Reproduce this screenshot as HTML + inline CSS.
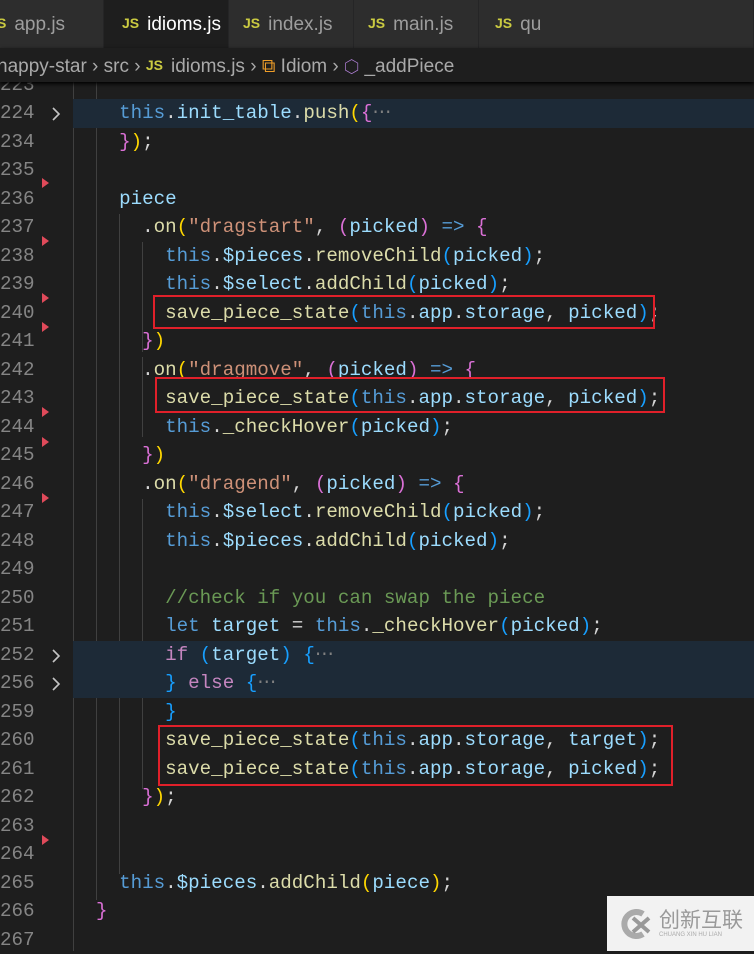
<!DOCTYPE html>
<html><head><meta charset="utf-8"><style>
*{margin:0;padding:0;box-sizing:border-box}
body{width:754px;height:951px;background:#1e1e1e;overflow:hidden;position:relative;font-family:"Liberation Sans",sans-serif}
.tabs{position:absolute;left:0;top:0;width:754px;height:48px;background:#252526}
.tab{position:absolute;top:0;height:48px;background:#2d2d2d;color:#9d9d9d;font-size:19px;line-height:46px;border-right:1px solid #252526}
.tab.act{background:#1e1e1e;color:#fff}
.js{color:#cbcb41;font-weight:bold;font-size:14px;margin-right:8px;vertical-align:2px}
.crumb{position:absolute;top:48px;left:0;width:754px;height:34px;background:#1e1e1e;color:#a9a9a9;font-size:19px;line-height:34px;white-space:nowrap;box-shadow:0 2px 4px #000;z-index:5}
.code{position:absolute;top:82px;left:0;width:754px;height:869px;overflow:hidden}
.row{position:absolute;left:0;width:754px;height:28.5px;font-family:"Liberation Mono",monospace;font-size:19.2px;line-height:28.5px;white-space:pre}
.ln{position:absolute;left:0;width:34px;text-align:right;color:#858585}
.tx{position:absolute;left:73px;color:#d4d4d4}
.hl{position:absolute;left:73px;right:0;top:0;bottom:0;background:#1d2a37}
.chev{position:absolute;left:49px;top:7px}
.k{color:#569cd6}.f{color:#dcdcaa}.v{color:#9cdcfe}.s{color:#ce9178}.c{color:#6a9955}.p{color:#c586c0}
.y{color:#ffd700}.m{color:#da70d6}.b{color:#179fff}.g{color:#808080}
.guide{position:absolute;width:1px;background:#404040}
.tri{position:absolute;left:42px;width:0;height:0;border-top:5px solid transparent;border-bottom:5px solid transparent;border-left:7px solid #e04a5a}
.box{position:absolute;border:2px solid #e0202a}
</style></head><body>
<div class="tabs">
<div class="tab" style="left:0;width:104px;padding-left:0"><span class="js" style="margin-left:-3px">S</span>app.js</div>
<div class="tab act" style="left:104px;width:125px;padding-left:18px"><span class="js">JS</span>idioms.js<span style="position:absolute;left:197px;top:19px;width:11px;height:11px;border-radius:50%;background:#fff"></span></div>
<div class="tab" style="left:229px;width:125px;padding-left:14px"><span class="js">JS</span>index.js</div>
<div class="tab" style="left:354px;width:125px;padding-left:14px"><span class="js">JS</span>main.js</div>
<div class="tab" style="left:479px;width:275px;padding-left:16px"><span class="js">JS</span>qu</div>
</div>
<div class="crumb"><span style="margin-left:-3px">happy-star</span> › src › <span class="js">JS</span>idioms.js › <span style="color:#ee9d28">⧉</span> Idiom › <span style="color:#b180d7">⬡</span> _addPiece</div>
<div class="code">
<div class="guide" style="left:73px;top:0;height:869px"></div>
<div class="guide" style="left:96px;top:0;height:818px"></div>
<div class="guide" style="left:119px;top:132px;height:660px"></div>
<div class="guide" style="left:142px;top:160px;height:110px"></div>
<div class="guide" style="left:142px;top:275px;height:80px"></div>
<div class="guide" style="left:142px;top:417px;height:290px"></div>
</div>
<div id="rows"></div>
<script>
(function(){
var L=[
["223",""],
["224",'    <span class="k">this</span>.<span class="v">init_table</span>.<span class="f">push</span><span class="y">(</span><span class="m">{</span><span class="g">⋯</span>',1,1],
["234",'    <span class="m">}</span><span class="y">)</span>;'],
["235",""],
["236",'    <span class="v">piece</span>'],
["237",'      .<span class="f">on</span><span class="y">(</span><span class="s">"dragstart"</span>, <span class="m">(</span><span class="v">picked</span><span class="m">)</span> <span class="k">=&gt;</span> <span class="m">{</span>'],
["238",'        <span class="k">this</span>.<span class="v">$pieces</span>.<span class="f">removeChild</span><span class="b">(</span><span class="v">picked</span><span class="b">)</span>;'],
["239",'        <span class="k">this</span>.<span class="v">$select</span>.<span class="f">addChild</span><span class="b">(</span><span class="v">picked</span><span class="b">)</span>;'],
["240",'        <span class="f">save_piece_state</span><span class="b">(</span><span class="k">this</span>.<span class="v">app</span>.<span class="v">storage</span>, <span class="v">picked</span><span class="b">)</span>;'],
["241",'      <span class="m">}</span><span class="y">)</span>'],
["242",'      .<span class="f">on</span><span class="y">(</span><span class="s">"dragmove"</span>, <span class="m">(</span><span class="v">picked</span><span class="m">)</span> <span class="k">=&gt;</span> <span class="m">{</span>'],
["243",'        <span class="f">save_piece_state</span><span class="b">(</span><span class="k">this</span>.<span class="v">app</span>.<span class="v">storage</span>, <span class="v">picked</span><span class="b">)</span>;'],
["244",'        <span class="k">this</span>.<span class="f">_checkHover</span><span class="b">(</span><span class="v">picked</span><span class="b">)</span>;'],
["245",'      <span class="m">}</span><span class="y">)</span>'],
["246",'      .<span class="f">on</span><span class="y">(</span><span class="s">"dragend"</span>, <span class="m">(</span><span class="v">picked</span><span class="m">)</span> <span class="k">=&gt;</span> <span class="m">{</span>'],
["247",'        <span class="k">this</span>.<span class="v">$select</span>.<span class="f">removeChild</span><span class="b">(</span><span class="v">picked</span><span class="b">)</span>;'],
["248",'        <span class="k">this</span>.<span class="v">$pieces</span>.<span class="f">addChild</span><span class="b">(</span><span class="v">picked</span><span class="b">)</span>;'],
["249",""],
["250",'        <span class="c">//check if you can swap the piece</span>'],
["251",'        <span class="k">let</span> <span class="v">target</span> = <span class="k">this</span>.<span class="f">_checkHover</span><span class="b">(</span><span class="v">picked</span><span class="b">)</span>;'],
["252",'        <span class="p">if</span> <span class="b">(</span><span class="v">target</span><span class="b">)</span> <span class="b">{</span><span class="g">⋯</span>',1,1],
["256",'        <span class="b">}</span> <span class="p">else</span> <span class="b">{</span><span class="g">⋯</span>',1,1],
["259",'        <span class="b">}</span>'],
["260",'        <span class="f">save_piece_state</span><span class="b">(</span><span class="k">this</span>.<span class="v">app</span>.<span class="v">storage</span>, <span class="v">target</span><span class="b">)</span>;'],
["261",'        <span class="f">save_piece_state</span><span class="b">(</span><span class="k">this</span>.<span class="v">app</span>.<span class="v">storage</span>, <span class="v">picked</span><span class="b">)</span>;'],
["262",'      <span class="m">}</span><span class="y">)</span>;'],
["263",""],["264",""],
["265",'    <span class="k">this</span>.<span class="v">$pieces</span>.<span class="f">addChild</span><span class="y">(</span><span class="v">piece</span><span class="y">)</span>;'],
["266",'  <span class="m">}</span>'],
["267",""]];
var chev='<svg class="chev" width="14" height="16" viewBox="0 0 14 16"><path d="M4 2 L10 8 L4 14" fill="none" stroke="#c5c5c5" stroke-width="1.6"/></svg>';
var h="";
for(var i=0;i<L.length;i++){
var ty=70.75+28.5*i;
h+='<div class="row" style="top:'+ty+'px">'+(L[i][2]?'<div class="hl"></div>':'')+'<span class="ln">'+L[i][0]+'</span>'+(L[i][3]?chev:'')+'<span class="tx">'+L[i][1]+'</span></div>';}
[183,241,298,327,412,442,498,840].forEach(function(y){h+='<div class="tri" style="top:'+(y-5)+'px"></div>'});
h+='<div class="box" style="left:153px;top:295px;width:502px;height:34px"></div>';
h+='<div class="box" style="left:155px;top:377px;width:510px;height:36px"></div>';
h+='<div class="box" style="left:158px;top:725px;width:515px;height:61px"></div>';
h+='<div style="position:absolute;left:607px;top:896px;width:147px;height:55px;background:#f2f2f2;color:#999;font-family:\'Noto Sans CJK SC\',sans-serif"><svg style="position:absolute;left:12px;top:12px" width="34" height="32" viewBox="0 0 34 32"><path d="M24 6 A12 12 0 1 0 24 26" fill="none" stroke="#aaa" stroke-width="6"/><path d="M14 10 L30 24 M30 10 L14 24" stroke="#999" stroke-width="4"/></svg><span style="position:absolute;left:52px;top:10px;font-size:21px;line-height:26px;color:#9a9a9a">创新互联</span><span style="position:absolute;left:52px;top:36px;font-size:6px;color:#aaa;font-family:\'Liberation Sans\'">CHUANG XIN HU LIAN</span></div>';
document.getElementById("rows").innerHTML=h;
})();
</script>
</body></html>
